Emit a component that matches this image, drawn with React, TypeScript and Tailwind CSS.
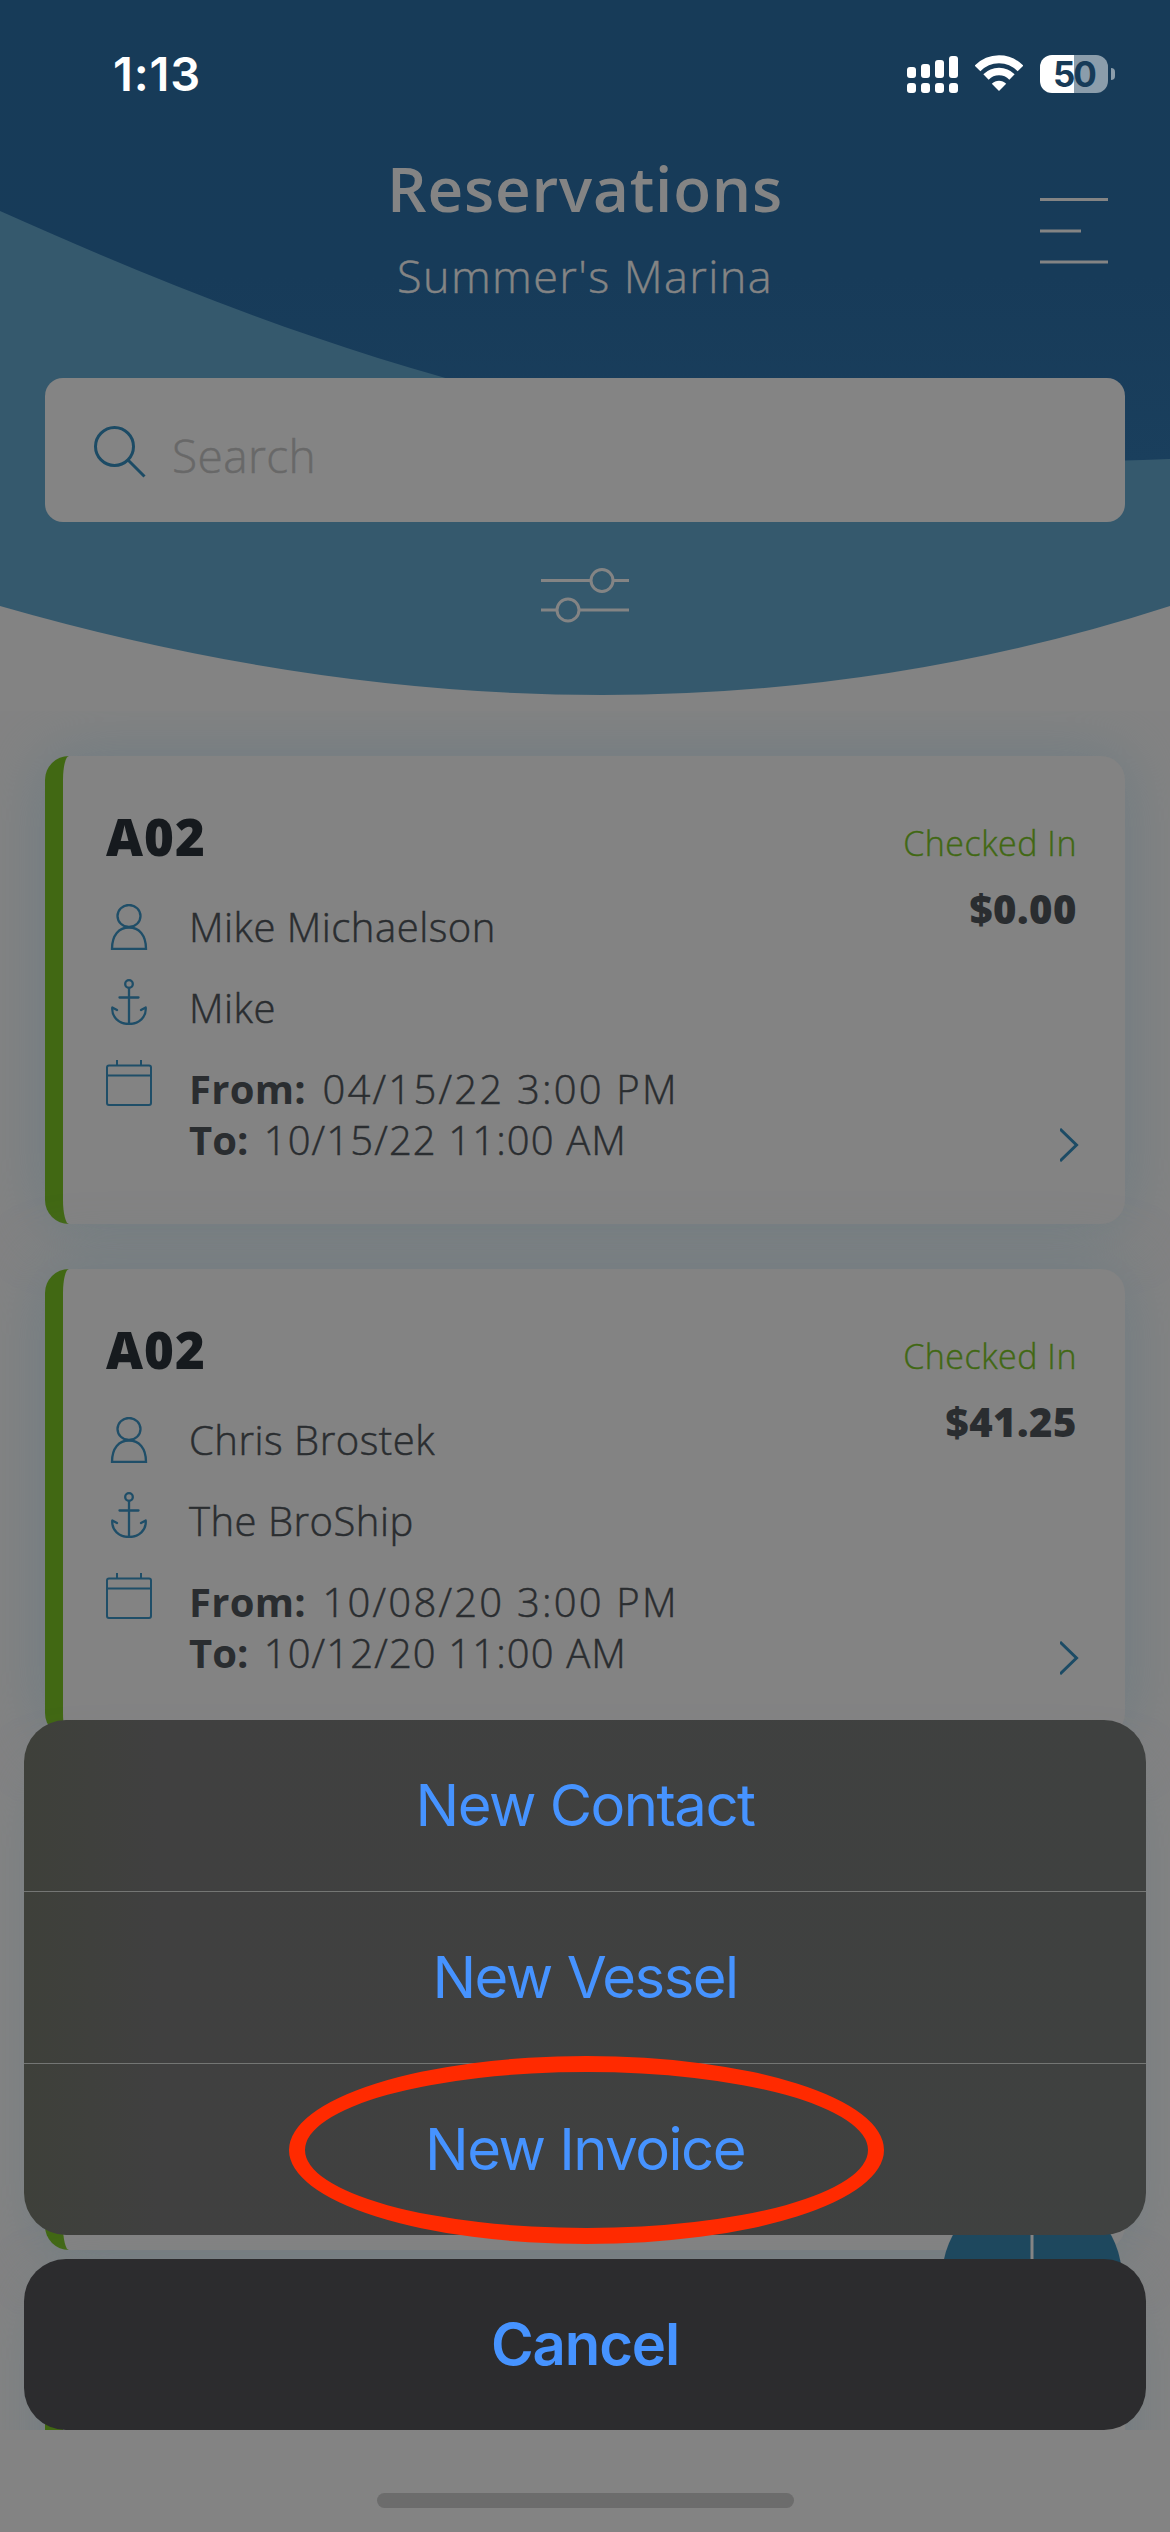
type Reservation = {
  slip: string;
  contact: string;
  vessel: string;
  from: string;
  to: string;
  status: string;
  balance: string;
};

const reservations: Reservation[] = [
  {
    slip: 'A02',
    contact: 'Mike Michaelson',
    vessel: 'Mike',
    from: '04/15/22 3:00 PM',
    to: '10/15/22 11:00 AM',
    status: 'Checked In',
    balance: '$0.00',
  },
  {
    slip: 'A02',
    contact: 'Chris Brostek',
    vessel: 'The BroShip',
    from: '10/08/20 3:00 PM',
    to: '10/12/20 11:00 AM',
    status: 'Checked In',
    balance: '$41.25',
  },
];

const actions = ['New Contact', 'New Vessel', 'New Invoice'];

function StatusBar() {
  return (
    <div className="flex h-[148px] items-center justify-between pl-[113px] pr-[55px] font-['Inter',sans-serif] text-white">
      <span className="text-[47px] font-semibold tracking-[0.8px]">1:13</span>
      <div className="flex items-center">
        <svg width="51" height="38" viewBox="0 0 51 38" fill="currentColor">
          <rect x="0" y="12" width="9" height="11" rx="3" />
          <rect x="14" y="9" width="9" height="14" rx="3" />
          <rect x="28" y="5" width="9" height="18" rx="3" />
          <rect x="42" y="1" width="9" height="22" rx="3" />
          <rect x="0" y="28" width="9" height="10" rx="3" />
          <rect x="14" y="28" width="9" height="10" rx="3" />
          <rect x="28" y="28" width="9" height="10" rx="3" />
          <rect x="42" y="28" width="9" height="10" rx="3" />
        </svg>
        <svg className="ml-[17px]" width="48" height="38" viewBox="0 0 48 38" fill="none" stroke="currentColor">
          <path d="M2.5 13.5C14.5 1.2 33.5 1.2 45.5 13.5" strokeWidth="8" />
          <path d="M11 22C18.2 14.7 29.8 14.7 37 22" strokeWidth="7.5" />
          <path d="M24 36L16.8 28.7C20.8 24.8 27.2 24.8 31.2 28.7Z" fill="currentColor" stroke="none" />
        </svg>
        <div className="ml-[17px] flex h-[38px] w-[68px] items-center justify-center rounded-xl bg-linear-to-r from-white from-50% to-[#8b9dab] to-50% text-[35px] font-bold leading-none tracking-[-2px] text-[#173b58]">
          50
        </div>
        <div className="ml-[3px] h-[12px] w-[4px] rounded-r-full bg-[#8b9dab]" />
      </div>
    </div>
  );
}

function Header() {
  return (
    <header className="relative h-[756px]">
      <svg className="absolute left-0 top-0" width="1170" height="700" viewBox="0 0 1170 700">
        <defs>
          <linearGradient id="sea" x1="0" y1="0" x2="0" y2="1">
            <stop offset="0" stopColor="#173b58" />
            <stop offset="0.6" stopColor="#173b59" />
            <stop offset="1" stopColor="#1a3f5d" />
          </linearGradient>
        </defs>
        <path d="M0 0H1170V606Q620 784 0 606Z" fill="#35596d" />
        <path d="M0 0H1170V459C650 480 300 345 0 211Z" fill="url(#sea)" />
      </svg>

      <div className="relative">
        <StatusBar />

        {/* Title and menu */}
        <div className="grid grid-cols-[1fr_auto_1fr] text-[#848484]">
          <div />
          <div className="text-center">
            <h1 className="h-20 text-[62px] font-semibold leading-[80px] tracking-[0.8px]">Reservations</h1>
            <p className="mt-[18px] h-[60px] text-[45px] font-light leading-[60px] tracking-[1.4px] [-webkit-text-stroke:0.5px]">Summer's Marina</p>
          </div>
          <svg className="mr-[62px] mt-[50px] justify-self-end" width="68" height="66" viewBox="0 0 68 66" stroke="currentColor" strokeWidth="3">
            <path d="M0 1.5H68M0 33H41M0 64H68" />
          </svg>
        </div>

        {/* Search */}
        <div className="mx-[45px] mt-[72px] flex h-36 items-center rounded-[18px] bg-[#848484] pl-[49px]">
          <svg className="mt-1" width="52" height="52" viewBox="0 0 52 52" fill="none" stroke="#1c4b65" strokeWidth="3">
            <circle cx="20.5" cy="20.5" r="19" />
            <path d="M34 34L50.500 50.500" />
          </svg>
          <span className="ml-[26px] mt-[10px] text-[46px] font-light tracking-[0.4px] text-[#686868] [-webkit-text-stroke:0.5px]">Search</span>
        </div>

        {/* Filter toggle */}
        <div className="mt-[44px] flex justify-center">
          <svg width="88" height="58" viewBox="0 0 88 58" fill="none" stroke="#848484" strokeWidth="3">
            <path d="M0 14.500H50M72 14.500H88M0 44H16M38 44H88" />
            <circle cx="61" cy="14.500" r="11" />
            <circle cx="27" cy="44" r="11" />
          </svg>
        </div>
      </div>
    </header>
  );
}

function PersonIcon() {
  return (
    <svg width="46" height="46" viewBox="0 0 46 46" fill="none" stroke="#1f4e68" strokeWidth="2.3">
      <ellipse cx="23" cy="12" rx="11.500" ry="11" />
      <path d="M6 45C6 31 13 23.500 23 23.500S40 31 40 45Z" />
    </svg>
  );
}

function AnchorIcon() {
  return (
    <svg width="46" height="46" viewBox="0 0 46 46" fill="none" stroke="#1f4e68" strokeWidth="2.3" strokeLinecap="round" strokeLinejoin="round">
      <circle cx="23" cy="5" r="3.800" />
      <path d="M23 9V45M13.500 18.500H32.500" />
      <path d="M11 31L6.300 28.500C5.500 38 13 45 23 45S40.500 38 39.700 28.500L35 31" />
    </svg>
  );
}

function CalendarIcon() {
  return (
    <svg width="46" height="46" viewBox="0 0 46 46" fill="none" stroke="#1f4e68" strokeWidth="2">
      <rect x="1" y="5.500" width="44" height="39.500" rx="2" />
      <path d="M1 15.500H45M11 0V5.500M35 0V5.500" />
    </svg>
  );
}

function ReservationCard({ item }: { item?: Reservation }) {
  return (
    <div className="flex h-[468px] shrink-0 justify-between rounded-3xl border-l-[18px] border-[#416813] bg-[#838383] pl-[43px] pr-[48px] shadow-[0_0_60px_6px_#707c82]">
      {item && (
        <>
          <div className="pt-[52px] text-[40px] font-light text-[#2a2d30]">
            <h2 className="h-[58px] text-[51px] font-extrabold leading-[57px] tracking-[1px] text-[#161a1e]">{item.slip}</h2>
            <div className="mt-[38px] flex h-[46px] gap-[37px] leading-[46px]">
              <PersonIcon />
              <span className="tracking-[0.5px] [-webkit-text-stroke:0.5px]">{item.contact}</span>
            </div>
            <div className="mt-[29px] flex h-[46px] gap-[37px] leading-[57px]">
              <AnchorIcon />
              <span className="tracking-[0.5px] [-webkit-text-stroke:0.5px]">{item.vessel}</span>
            </div>
            <div className="mt-[35px] flex gap-[37px]">
              <CalendarIcon />
              <div className="mt-[3px] leading-[51px]">
                <p>
                  <b className="mr-[6px] font-bold tracking-[0.3px]">From:</b>{' '}
                  <span className="tracking-[2.2px] [-webkit-text-stroke:0.5px]">{item.from}</span>
                </p>
                <p>
                  <b className="mr-[5px] font-bold">To:</b>{' '}
                  <span className="tracking-[1.1px] [-webkit-text-stroke:0.5px]">{item.to}</span>
                </p>
              </div>
            </div>
          </div>
          <div className="flex flex-col items-end py-[62px]">
            <span className="h-[50px] text-[34px] font-light leading-[50px] tracking-[0.5px] text-[#416813] [-webkit-text-stroke:0.4px]">{item.status}</span>
            <span className="mt-[16px] h-[50px] text-[40px] font-extrabold leading-[50px] tracking-[0.5px] text-[#2a2d30]">{item.balance}</span>
            <svg className="-mr-[2px] mt-auto" width="19" height="34" viewBox="0 0 19 34" fill="none" stroke="#1c4b65" strokeWidth="3">
              <path d="M0 1L16.500 17L0 33" />
            </svg>
          </div>
        </>
      )}
    </div>
  );
}

function ActionSheet() {
  return (
    <div className="absolute inset-x-6 bottom-[102px] text-center font-['Inter',sans-serif] text-[58px] text-[#4693ff]">
      <div className="divide-y divide-[#747674] overflow-hidden rounded-[42px] bg-linear-to-r from-[#3e403a] via-[#404040] via-12% to-[#3f4140]">
        {actions.map((label) => (
          <button key={label} className="box-content block h-[171px] w-full leading-[171px] tracking-[-1.5px]">
            {label}
          </button>
        ))}
      </div>
      <button className="mt-6 block h-[171px] w-full rounded-[42px] bg-[#2c2c2e] font-semibold leading-[171px] tracking-[-1.1px]">
        Cancel
      </button>
    </div>
  );
}

export default function App() {
  return (
    <div className="relative h-[2532px] w-[1170px] overflow-hidden bg-[#838383] font-['Open_Sans',sans-serif]">
      <Header />

      <main className="-mt-[45px] h-[1719px] overflow-hidden px-[45px] pt-[45px]">
        <div className="flex flex-col gap-[45px]">
          {reservations.map((item) => (
            <ReservationCard key={item.contact} item={item} />
          ))}
          <ReservationCard />
          <ReservationCard />
        </div>
      </main>
      <div className="flex h-[102px] justify-center pt-[63px]">
        <div className="h-[15px] w-[417px] rounded-full bg-[#6c6c6c]" />
      </div>

      {/* Add button */}
      <div className="absolute left-[942px] top-[2188px] flex size-[180px] items-center justify-center rounded-full bg-[#1e485e]">
        <svg width="96" height="96" viewBox="0 0 96 96" stroke="#848484" strokeWidth="3">
          <path d="M48 0V96M0 48H96" />
        </svg>
      </div>

      <ActionSheet />

      {/* Highlight around New Invoice */}
      <div className="absolute left-[289px] top-[2056px] h-[188px] w-[595px] rounded-[50%] border-[16px] border-[#ff2a00]" />
    </div>
  );
}
